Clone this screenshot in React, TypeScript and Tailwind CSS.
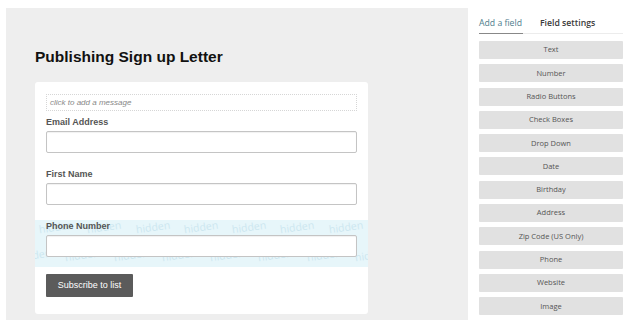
import React from "react";

const fieldTypes = [
  "Text",
  "Number",
  "Radio Buttons",
  "Check Boxes",
  "Drop Down",
  "Date",
  "Birthday",
  "Address",
  "Zip Code (US Only)",
  "Phone",
  "Website",
  "Image",
];

const sans = "font-['Liberation_Sans',Arial,sans-serif]";

function Field({ label }: { label: string }) {
  return (
    <div>
      <div className="text-[9px] font-bold leading-[12px] text-[#555]">{label}</div>
      <div className="mt-[3px] h-[22px] w-[311px] rounded-[2px] border border-[#c4c4c4] bg-white shadow-[inset_0_1px_1px_rgba(0,0,0,0.06)]" />
    </div>
  );
}

function HiddenRow({ offset }: { offset: string }) {
  return (
    <div className={`flex gap-[14px] whitespace-nowrap ${offset}`}>
      {Array.from({ length: 8 }).map((_, i) => (
        <span key={i} className="inline-block -rotate-[8deg] font-['Open_Sans',sans-serif] text-[10.5px] text-[#cde7f0]">
          hidden
        </span>
      ))}
    </div>
  );
}

export default function App() {
  return (
    <div className={`flex h-[335px] w-[642px] bg-white ${sans}`}>
      <div className="ml-[6px] mt-[8px] h-[312px] w-[462px] bg-[#eeeeee] pl-[29px]">
        <h1 className="mt-[40px] text-[15.5px] font-bold leading-[18px] text-[#111]">Publishing Sign up Letter</h1>
        <div className="mt-[16px] h-[232px] w-[333px] rounded-[3px] bg-white pt-[12px]">
          <div className="ml-[11px] flex h-[17px] w-[311px] items-center border border-dotted border-[#d6d6d6] pl-[3px] text-[8px] italic text-[#888]">
            click to add a message
          </div>
          <div className="ml-[11px] mt-[5px]">
            <Field label="Email Address" />
          </div>
          <div className="ml-[11px] mt-[15px]">
            <Field label="First Name" />
          </div>
          <div className="relative mt-[15px] h-[47px] overflow-hidden bg-[#e7f6fa] pl-[11px]">
            <div aria-hidden="true" className="absolute inset-0 flex flex-col">
              <HiddenRow offset="ml-[4px]" />
              <HiddenRow offset="-ml-[18px] mt-[12px]" />
            </div>
            <div className="relative">
              <Field label="Phone Number" />
            </div>
          </div>
          <button className="ml-[11px] mt-[7px] flex h-[23px] w-[87px] items-center justify-center rounded-[1px] bg-[#5b5b5b] text-[9px] text-white">
            Subscribe to list
          </button>
        </div>
      </div>
      <div className="ml-[11px] mt-[14px] w-[144px] font-['Open_Sans',sans-serif]">
        <div className="flex border-b border-[#ececec] text-[8.7px] leading-[19px]">
          <div className="-mb-px border-b-[1.5px] border-[#888] pr-[1px] text-[#4e7d8c]">Add a field</div>
          <div className="ml-[17px] font-semibold text-[#3a3a3a]">Field settings</div>
        </div>
        <div className="mt-[7px] flex flex-col gap-[5.3px]">
          {fieldTypes.map((t) => (
            <div key={t} className="flex h-[18px] items-center justify-center rounded-[1px] bg-[#e1e1e1] text-[7.5px] text-[#555]">
              {t}
            </div>
          ))}
        </div>
      </div>
    </div>
  );
}
